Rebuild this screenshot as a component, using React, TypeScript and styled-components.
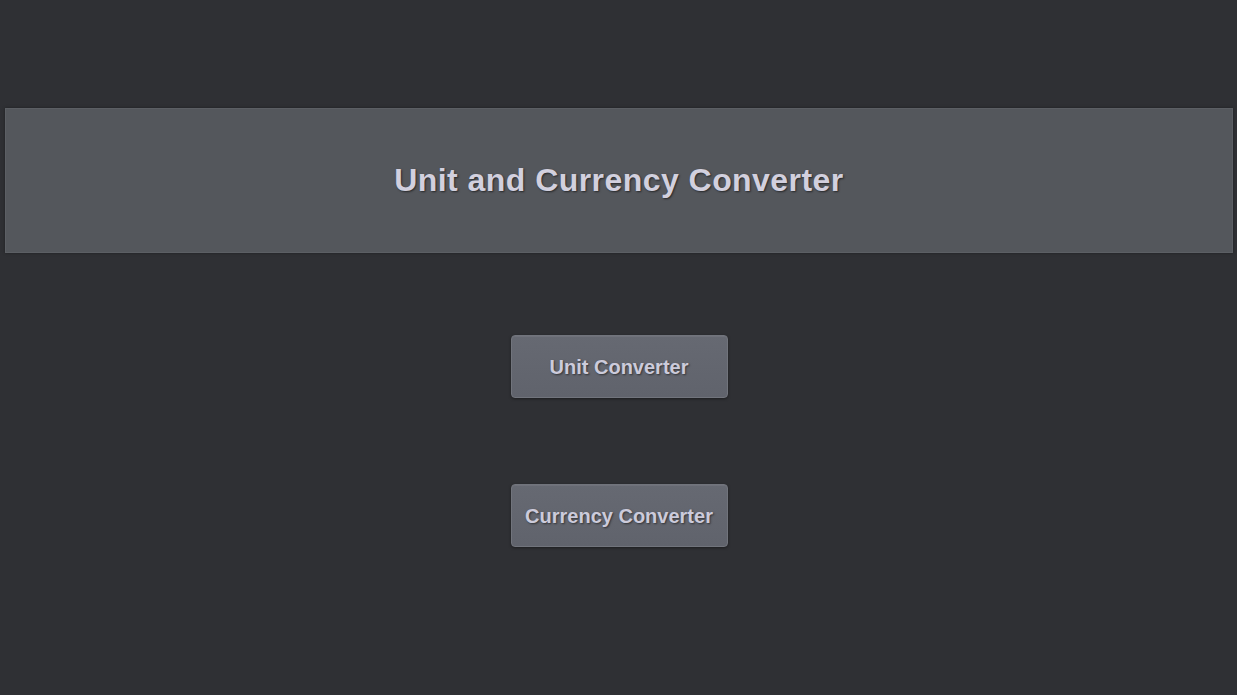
import React from "react";
import styled, { createGlobalStyle } from "styled-components";

const Global = createGlobalStyle`
  html, body {
    margin: 0;
    padding: 0;
    background: #2f3034;
    font-family: "Liberation Sans", Arial, sans-serif;
  }
`;

const Page = styled.div`
  min-height: 695px;
  padding: 108px 4px 0 5px;
  box-sizing: border-box;
  display: flex;
  flex-direction: column;
  align-items: stretch;
`;

const Header = styled.header`
  height: 145px;
  box-sizing: border-box;
  background: #54575c;
  border: 1px solid #5c5f64;
  box-shadow: 0 0 3px rgba(0, 0, 0, 0.35);
  display: flex;
  align-items: center;
  justify-content: center;
`;

const Title = styled.h1`
  margin: 0;
  font-size: 32px;
  font-weight: bold;
  letter-spacing: 0.45px;
  color: #d2d0de;
  text-shadow: 1px 1px 2px rgba(0, 0, 0, 0.55);
`;

const Menu = styled.nav`
  display: flex;
  flex-direction: column;
  align-items: center;
  gap: 86px;
  margin-top: 82px;
`;

const MenuButton = styled.button`
  width: 217px;
  height: 63px;
  box-sizing: border-box;
  padding: 2px 0 0;
  background: linear-gradient(#666972, #60636c);
  border: 1px solid #71747c;
  border-radius: 4px;
  box-shadow: 0 1px 3px rgba(0, 0, 0, 0.4), inset 0 1px 0 rgba(255, 255, 255, 0.06);
  font-family: "Liberation Sans", Arial, sans-serif;
  font-size: 20px;
  font-weight: bold;
  color: #cccbdb;
  text-shadow: 1px 1px 2px rgba(0, 0, 0, 0.5);
  cursor: pointer;
`;

export default function App() {
  return (
    <>
      <Global />
      <Page>
        <Header>
          <Title>Unit and Currency Converter</Title>
        </Header>
        <Menu>
          <MenuButton>Unit Converter</MenuButton>
          <MenuButton>Currency Converter</MenuButton>
        </Menu>
      </Page>
    </>
  );
}
